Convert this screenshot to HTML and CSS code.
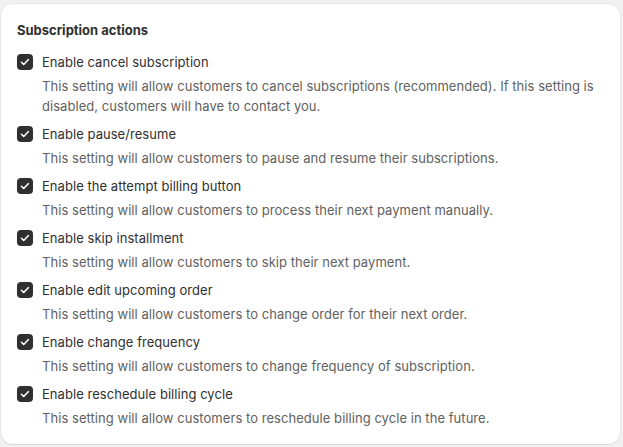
FILE: index.html
```html
<!DOCTYPE html>
<html lang="en">
<head>
<meta charset="utf-8">
<title>Subscription actions</title>
<link rel="stylesheet" href="styles.css">
</head>
<body>
<div class="card">
  <h2 class="title">Subscription actions</h2>
  <ul class="list">
    <li class="item">
      <label class="row"><span class="box"><svg viewBox="0 0 16 16"><path d="M4.5 8.3l2.2 2.2 4.6-4.8"/></svg></span><span class="label">Enable cancel subscription</span></label>
      <p class="desc">This setting will allow customers to cancel subscriptions (recommended). If this setting is disabled, customers will have to contact you.</p>
    </li>
    <li class="item">
      <label class="row"><span class="box"><svg viewBox="0 0 16 16"><path d="M4.5 8.3l2.2 2.2 4.6-4.8"/></svg></span><span class="label">Enable pause/resume</span></label>
      <p class="desc">This setting will allow customers to pause and resume their subscriptions.</p>
    </li>
    <li class="item">
      <label class="row"><span class="box"><svg viewBox="0 0 16 16"><path d="M4.5 8.3l2.2 2.2 4.6-4.8"/></svg></span><span class="label">Enable the attempt billing button</span></label>
      <p class="desc">This setting will allow customers to process their next payment manually.</p>
    </li>
    <li class="item">
      <label class="row"><span class="box"><svg viewBox="0 0 16 16"><path d="M4.5 8.3l2.2 2.2 4.6-4.8"/></svg></span><span class="label">Enable skip installment</span></label>
      <p class="desc">This setting will allow customers to skip their next payment.</p>
    </li>
    <li class="item">
      <label class="row"><span class="box"><svg viewBox="0 0 16 16"><path d="M4.5 8.3l2.2 2.2 4.6-4.8"/></svg></span><span class="label">Enable edit upcoming order</span></label>
      <p class="desc">This setting will allow customers to change order for their next order.</p>
    </li>
    <li class="item">
      <label class="row"><span class="box"><svg viewBox="0 0 16 16"><path d="M4.5 8.3l2.2 2.2 4.6-4.8"/></svg></span><span class="label">Enable change frequency</span></label>
      <p class="desc">This setting will allow customers to change frequency of subscription.</p>
    </li>
    <li class="item">
      <label class="row"><span class="box"><svg viewBox="0 0 16 16"><path d="M4.5 8.3l2.2 2.2 4.6-4.8"/></svg></span><span class="label">Enable reschedule billing cycle</span></label>
      <p class="desc">This setting will allow customers to reschedule billing cycle in the future.</p>
    </li>
  </ul>
</div>
</body>
</html>
```

FILE: styles.css
```css
html, body {
  margin: 0;
  padding: 0;
  background: #f1f1f1;
}
body {
  padding: 4px 3px 2px 1px;
  font-family: Inter, "Noto Sans", sans-serif;
  font-size: 13px;
  line-height: 20px;
  letter-spacing: 0.05px;
  color: #303030;
  -webkit-font-smoothing: antialiased;
}
.card {
  background: #fff;
  border-radius: 12px;
  padding: 16px;
  box-shadow: 0 1px 0 0 rgba(26, 26, 26, 0.07), 0 0 0 1px rgba(26, 26, 26, 0.04);
}
.title {
  margin: 0 0 12px;
  font-size: 13px;
  line-height: 20px;
  font-weight: 650;
  letter-spacing: 0;
  color: #303030;
}
.list {
  list-style: none;
  margin: 0;
  padding: 0;
  display: flex;
  flex-direction: column;
  gap: 8px;
}
.item {
  display: flex;
  flex-direction: column;
  gap: 4px;
}
.row {
  display: flex;
  align-items: center;
  gap: 9px;
}
.box {
  width: 16px;
  height: 16px;
  border-radius: 4px;
  background: #303030;
  display: flex;
  align-items: center;
  justify-content: center;
  flex: none;
}
.box svg {
  width: 16px;
  height: 16px;
  fill: none;
  stroke: #fff;
  stroke-width: 1.6;
  stroke-linecap: round;
  stroke-linejoin: round;
}
.label {
  color: #303030;
}
.desc {
  margin: 0;
  padding-left: 25px;
  color: #616161;
}
```
